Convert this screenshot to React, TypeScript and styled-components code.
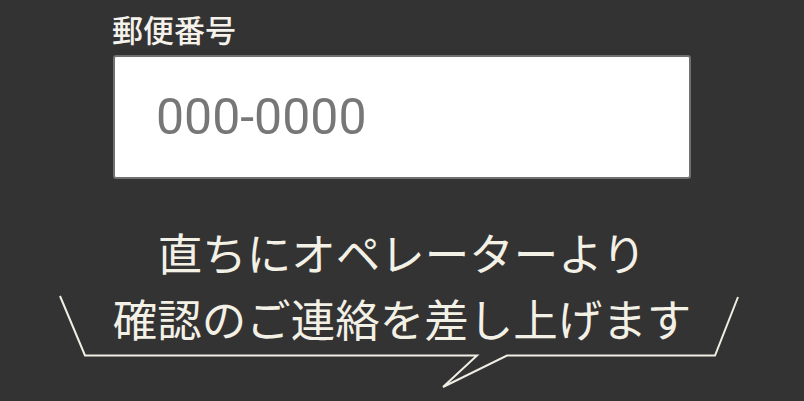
import styled, { createGlobalStyle } from 'styled-components'

const GlobalStyle = createGlobalStyle`
  html, body {
    margin: 0;
    padding: 0;
    background: #333333;
  }
  body {
    font-family: 'Noto Sans CJK JP', 'Noto Sans', sans-serif;
  }
`

const Page = styled.div`
  width: 804px;
  height: 401px;
  overflow: hidden;
  background: #333333;
  padding-top: 9px;
  box-sizing: border-box;
`

const Field = styled.div`
  display: flex;
  flex-direction: column;
  gap: 6px;
  width: 578px;
  margin-left: 113px;
`

const Label = styled.label`
  color: #f4f2ea;
  font-size: 31px;
  font-weight: 500;
  line-height: 40px;
  margin-left: -1px;
`

const Input = styled.input`
  box-sizing: border-box;
  width: 578px;
  height: 124px;
  padding: 0 0 0 41px;
  border: 2px solid #707070;
  border-radius: 3px;
  background: #ffffff;
  font-family: Roboto, 'Liberation Sans', sans-serif;
  font-size: 50px;
  color: #333;
  outline: none;
  &::placeholder {
    color: #777777;
  }
`

const Bubble = styled.div`
  position: relative;
  margin-top: 40px;
  height: 171px;
`

const BubbleText = styled.p`
  position: relative;
  margin: 0;
  text-align: center;
  color: #f3f0e6;
  font-size: 44.5px;
  font-weight: 400;
  line-height: 66px;
`

const BubbleFrame = styled.svg`
  position: absolute;
  left: 0;
  top: 0;
  width: 804px;
  height: 171px;
  pointer-events: none;
`

export default function App() {
  return (
    <Page>
      <GlobalStyle />
      <Field>
        <Label htmlFor="zip">郵便番号</Label>
        <Input id="zip" type="text" placeholder="000-0000" />
      </Field>
      <Bubble>
        <BubbleFrame viewBox="0 0 804 171">
          <polyline
            points="60,77 85,136.5 477,136.5 443,168 507,136.5 715,136.5 738,78"
            fill="none"
            stroke="#f0ede3"
            strokeWidth="2"
            strokeLinejoin="miter"
          />
        </BubbleFrame>
        <BubbleText>
          直ちにオペレーターより
          <br />
          確認のご連絡を差し上げます
        </BubbleText>
      </Bubble>
    </Page>
  )
}
